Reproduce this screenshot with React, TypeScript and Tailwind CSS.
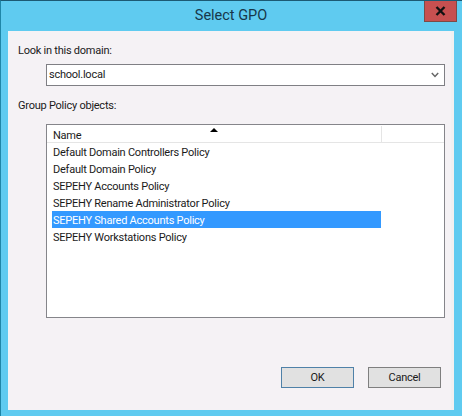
import React from "react";

const rows = [
  "Default Domain Controllers Policy",
  "Default Domain Policy",
  "SEPEHY Accounts Policy",
  "SEPEHY Rename Administrator Policy",
  "SEPEHY Shared Accounts Policy",
  "SEPEHY Workstations Policy",
];

export default function App() {
  return (
    <div className="w-[462px] h-[416px] flex flex-col bg-[#5fcbf0] border-t border-t-[#1c5a74] border-l border-l-[#1f86a8] overflow-hidden text-[11px] tracking-[-0.24px] text-[#1a1a1a] font-['Roboto',sans-serif]">
      <div className="relative h-[30px] shrink-0 flex items-center justify-center pr-[1px] text-[14.5px] tracking-normal text-[#17374a]">
        <span>Select GPO</span>
        <div className="absolute top-[-1px] left-[423px] w-[33px] h-[22px] bg-[#c75050] border border-[#7d4a46] flex items-center justify-center">
          <svg width="11" height="10" viewBox="0 0 11 10">
            <path d="M1.5 1 L9.5 9 M9.5 1 L1.5 9" stroke="#111" strokeWidth="2.4" fill="none" />
          </svg>
        </div>
      </div>
      <div className="ml-[7px] mr-[8px] h-[379px] shrink-0 bg-[#f5f2f5] flex flex-col border-l border-l-[#f1f5f9] border-r-[3px] border-r-[#f1f1f1]">
        <div className="mt-[12px] ml-[9px] h-[16px] leading-[16px]">Look in this domain:</div>
        <div className="mt-[5px] ml-[37px] w-[399px] h-[22px] bg-white border border-[#7f7f84] flex items-center justify-between pl-[2px] pr-[5px]">
          <span className="pt-[1px]">school.local</span>
          <svg width="8" height="6" viewBox="0 0 8 6">
            <path d="M0.8 1 L4 4.4 L7.2 1" stroke="#666" strokeWidth="1.5" fill="none" />
          </svg>
        </div>
        <div className="mt-[12px] ml-[9px] h-[16px] leading-[16px]">Group Policy objects:</div>
        <div className="mt-[10px] ml-[37px] w-[399px] h-[194px] bg-white border border-[#85858a] flex flex-col">
          <div className="relative h-[18px] shrink-0 flex border-b border-b-[#e5e5e5] pl-[1px] pt-[1px]">
            <div className="w-[334px] h-full border-r border-r-[#e5e5e5] pl-[5px] leading-[20px]">Name</div>
            <div className="absolute left-[163px] top-[3px] w-0 h-0 border-l-[4px] border-r-[4px] border-b-[4px] border-l-transparent border-r-transparent border-b-black" />
          </div>
          <div className="flex flex-col pl-[5px]">
            {rows.map((r, i) => (
              <div
                key={r}
                className={
                  i === 4
                    ? "w-[329px] h-[17px] leading-[19px] pl-[1px] bg-[#3399ff] text-white"
                    : "w-[329px] h-[17px] leading-[19px] pl-[1px]"
                }
              >
                {r}
              </div>
            ))}
          </div>
        </div>
        <div className="mt-[49px] ml-[272px] flex gap-[14px]">
          <button className="w-[73px] h-[21px] bg-[#e1e1e1] border border-[#4f81a8] flex items-center justify-center pt-[2px]">OK</button>
          <button className="w-[73px] h-[21px] bg-[#e1e1e1] border border-[#7f7f7f] flex items-center justify-center pt-[2px]">Cancel</button>
        </div>
      </div>
    </div>
  );
}
